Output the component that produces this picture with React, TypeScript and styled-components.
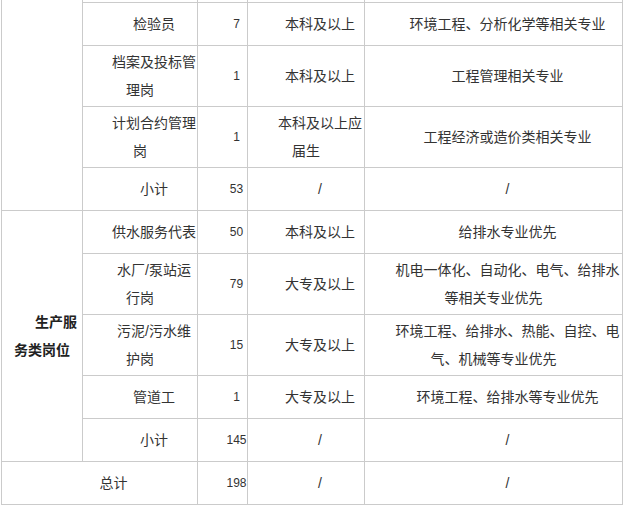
import * as React from 'react'
import styled, { createGlobalStyle } from 'styled-components'

const GlobalStyle = createGlobalStyle`
  html, body {
    margin: 0;
    padding: 0;
    background: #fff;
  }
  body {
    font-family: 'Liberation Sans', 'Noto Sans CJK SC', sans-serif;
    color: #333;
  }
`

const Page = styled.div`
  width: 624px;
  height: 505px;
  overflow: hidden;
  background: #fff;
`

// borders are the grid gaps showing the grey background through
const Sheet = styled.div`
  display: grid;
  grid-template-columns: 80px 114px 49px 116px 257px;
  grid-template-rows: 2px 42px 60px 60px 42px 42px 60px 60px 42px 42px 42px;
  gap: 1px;
  width: max-content;
  margin-left: 1px;
  padding: 0 1px 1px;
  background: #cbcbcb;
`

const Cell = styled.div<{ $rows?: number; $cols?: number }>`
  background: #fff;
  display: flex;
  align-items: center;
  justify-content: center;
  overflow: visible;
  grid-row: ${props => (props.$rows ? `span ${props.$rows}` : 'auto')};
  grid-column: ${props => (props.$cols ? `span ${props.$cols}` : 'auto')};
`

const Text = styled.p<{ $bold?: boolean; $num?: boolean }>`
  margin: 0;
  width: 100%;
  font-size: ${props => (props.$num ? '12px' : '14px')};
  line-height: 28px;
  text-indent: 28px;
  text-align: center;
  font-weight: ${props => (props.$bold ? 700 : 400)};
  color: ${props => (props.$bold ? '#222' : '#333')};
`

type Row = [string, string, string, string]

const officeRows: Row[] = [
  ['检验员', '7', '本科及以上', '环境工程、分析化学等相关专业'],
  ['档案及投标管理岗', '1', '本科及以上', '工程管理相关专业'],
  ['计划合约管理岗', '1', '本科及以上应届生', '工程经济或造价类相关专业'],
  ['小计', '53', '/', '/'],
]

const serviceRows: Row[] = [
  ['供水服务代表', '50', '本科及以上', '给排水专业优先'],
  ['水厂/泵站运行岗', '79', '大专及以上', '机电一体化、自动化、电气、给排水等相关专业优先'],
  ['污泥/污水维护岗', '15', '大专及以上', '环境工程、给排水、热能、自控、电气、机械等专业优先'],
  ['管道工', '1', '大专及以上', '环境工程、给排水等专业优先'],
  ['小计', '145', '/', '/'],
]

const renderRows = (rows: Row[]) =>
  rows.map(row =>
    row.map((value, i) => (
      <Cell key={`${row[0]}-${row[1]}-${i}`}>
        <Text $num={i === 1}>{value}</Text>
      </Cell>
    ))
  )

export default function App(): JSX.Element {
  return (
    <Page>
      <GlobalStyle />
      <Sheet>
        <Cell $rows={5} />
        <Cell />
        <Cell />
        <Cell />
        <Cell />
        {renderRows(officeRows)}

        <Cell $rows={5}>
          <Text $bold>生产服务类岗位</Text>
        </Cell>
        {renderRows(serviceRows)}

        <Cell $cols={2}>
          <Text>总计</Text>
        </Cell>
        <Cell>
          <Text $num>198</Text>
        </Cell>
        <Cell>
          <Text>/</Text>
        </Cell>
        <Cell>
          <Text>/</Text>
        </Cell>
      </Sheet>
    </Page>
  )
}
